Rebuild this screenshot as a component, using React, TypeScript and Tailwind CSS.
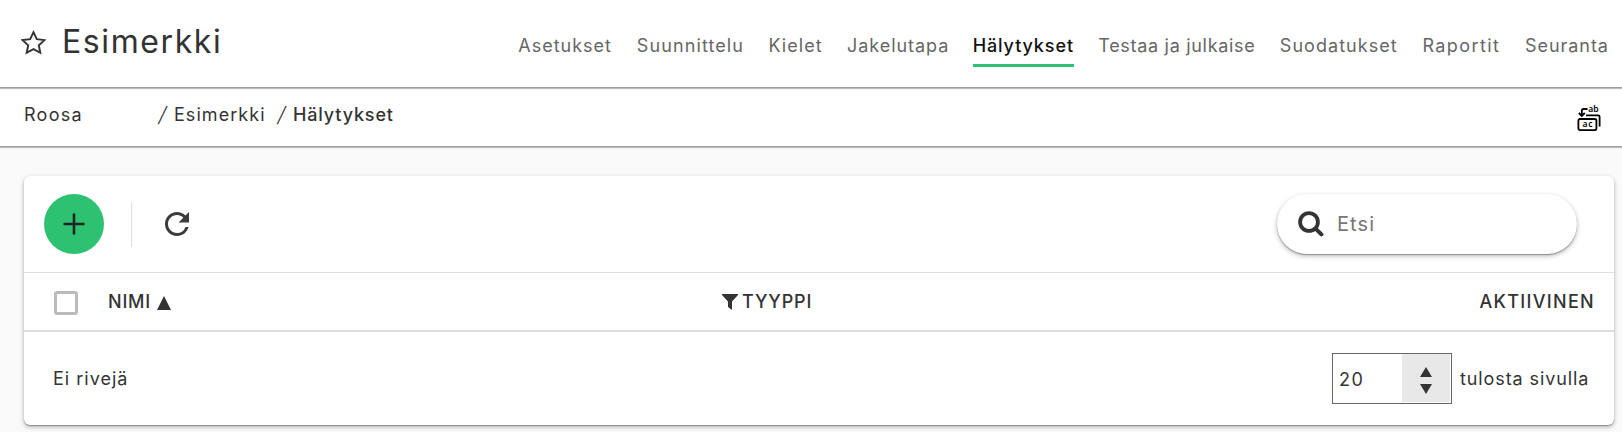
import { clsx } from 'clsx'

interface NavItem {
  label: string
  className: string
  active?: boolean
}

const NAV_ITEMS: NavItem[] = [
  { label: 'Asetukset', className: 'w-[94px] tracking-[1px]' },
  { label: 'Suunnittelu', className: 'w-[107px] tracking-[1.1px]' },
  { label: 'Kielet', className: 'w-[54px] tracking-[1.05px]' },
  { label: 'Jakelutapa', className: 'w-[101px] tracking-[0.95px]' },
  { label: 'Hälytykset', className: 'w-[101px] tracking-[0.9px]', active: true },
  { label: 'Testaa ja julkaise', className: 'w-[157px] tracking-[0.7px]' },
  { label: 'Suodatukset', className: 'w-[118px] tracking-[1.05px]' },
  { label: 'Raportit', className: 'w-[78px] tracking-[1.4px]' },
  { label: 'Seuranta', className: 'w-[83px] tracking-[0.95px]' },
]

// ---------------------------------------------------------------------------
// Icons
// ---------------------------------------------------------------------------

function StarIcon() {
  return (
    <svg viewBox="0 0 26 25" className="w-[26px] h-[25px] shrink-0" fill="none" stroke="#333" strokeWidth="1.9">
      <path d="M12.5 2.2l3.3 6.9 7.6 1-5.6 5.2 1.5 7.5-6.8-3.7-6.8 3.7 1.5-7.5-5.6-5.2 7.6-1z" />
    </svg>
  )
}

function TranslateIcon() {
  return (
    <svg viewBox="0 0 26 30" className="w-[26px] h-[30px]" fill="none" stroke="#000" strokeWidth="1.8">
      <rect x="2.4" y="17" width="18" height="11.2" rx="1.6" />
      <path d="M10 13.4h12.2a1.4 1.4 0 0 1 1.4 1.4v9.7" />
      <path d="M11.5 7H7.6a1.8 1.8 0 0 0-1.8 1.8V13.4" />
      <path d="M2.8 11l3 3 3-3" />
      <text x="12.2" y="9.6" fontSize="8.5" fontFamily="Noto Sans, sans-serif" fontWeight="600" fill="#000" stroke="none">ab</text>
      <text x="6.6" y="25.4" fontSize="8.5" fontFamily="Noto Sans, sans-serif" fontWeight="600" letterSpacing="0.6" fill="#000" stroke="none">ac</text>
    </svg>
  )
}

function RefreshIcon() {
  return (
    <svg viewBox="4 4 16 16" className="w-[24px] h-[24px]" fill="#3c3c3c">
      <path d="M17.65 6.35A7.958 7.958 0 0 0 12 4c-4.42 0-7.99 3.58-7.99 8s3.57 8 7.99 8c3.73 0 6.84-2.55 7.73-6h-2.08A5.99 5.99 0 0 1 12 18c-3.31 0-6-2.69-6-6s2.69-6 6-6c1.66 0 3.14.69 4.22 1.78L13 11h7V4l-2.35 2.35z" />
    </svg>
  )
}

function SearchIcon() {
  return (
    <svg viewBox="0 0 26 26" className="w-[26px] h-[26px] shrink-0" fill="none" stroke="#333" strokeLinecap="round">
      <circle cx="11" cy="11" r="8.9" strokeWidth="3.8" />
      <path d="M17.8 17.8l5.6 5.6" strokeWidth="4" />
    </svg>
  )
}

function FilterIcon() {
  return (
    <svg viewBox="0 0 16 16" className="w-4 h-4" fill="#333">
      <path d="M0 0h16v1L10 7.5V16l-4-3V7.5L0 1z" />
    </svg>
  )
}

// ---------------------------------------------------------------------------
// Page
// ---------------------------------------------------------------------------

function Header() {
  return (
    <header className="h-[87px] flex items-start bg-white pl-[21px] pr-[14px]">
      <div className="flex items-center h-[84px]">
        <StarIcon />
        <h1 className="ml-[15px] text-[32px] leading-10 tracking-[1.6px] text-[#333]">Esimerkki</h1>
      </div>
      <nav className="ml-auto flex gap-[24.6px] pt-8">
        {NAV_ITEMS.map((item) => (
          <a
            key={item.label}
            href="#"
            className={clsx(
              'h-8 box-content text-[18px] leading-7 whitespace-nowrap border-b-[3px]',
              item.className,
              item.active ? 'font-medium text-[#111] border-[#2cc272]' : 'text-[#666] border-transparent',
            )}
          >
            {item.label}
          </a>
        ))}
      </nav>
    </header>
  )
}

function Slash() {
  return <span className="w-4 pl-px text-[21px] font-light -skew-x-12">/</span>
}

function Breadcrumbs() {
  return (
    <div className="h-[59px] flex items-start border-t border-[#a0a0a0] bg-white shadow-[inset_0_1px_0_#bdbdbd,inset_0_2px_0_#f2f2f2] pl-6 pr-5 text-[18px] leading-7 text-[#333]">
      <div className="flex pt-[13px]">
        <span className="w-[134px] tracking-[1.3px]">Roosa</span>
        <Slash />
        <span className="w-[103px] tracking-[1.05px]">Esimerkki</span>
        <Slash />
        <span className="font-medium tracking-[0.85px]">Hälytykset</span>
      </div>
      <div className="ml-auto pt-[14px]">
        <TranslateIcon />
      </div>
    </div>
  )
}

function Toolbar() {
  return (
    <div className="h-24 flex items-center pl-5 pr-[37px]">
      <button type="button" className="w-[60px] h-[60px] rounded-full bg-[#2cc272] flex items-center justify-center">
        <svg viewBox="0 0 22 22" className="w-[22px] h-[22px]" stroke="#222" strokeWidth="2.6">
          <path d="M11 .5v21M.5 11h21" />
        </svg>
      </button>
      <div className="ml-[27px] w-px h-[45px] bg-[#dedede]" />
      <button type="button" className="ml-[33px]">
        <RefreshIcon />
      </button>
      <label className="ml-auto w-[300px] h-[60px] rounded-full bg-white flex items-center pl-[21px] shadow-[0_1px_1px_rgba(0,0,0,0.3),0_2px_5px_rgba(0,0,0,0.28)]">
        <SearchIcon />
        <input placeholder="Etsi" className="ml-[13px] w-52 text-[20px] tracking-[1.1px] outline-none placeholder:text-[#777]" />
      </label>
    </div>
  )
}

function TableHead() {
  return (
    <div className="h-[60px] flex items-center border-t border-t-[#dedede] border-b-2 border-b-[#dedede] pl-[30px] pr-[18px] text-[18px] leading-7 font-medium text-[#333]">
      <span className="mt-0.5 w-6 h-6 rounded-[3px] border-[3px] border-[#bbb]" />
      <div className="ml-[30px] w-[614px] flex items-center">
        <span className="w-[49px] tracking-[0.8px]">NIMI</span>
        <svg viewBox="0 0 14 14" className="w-3.5 h-3.5 mt-0.5" fill="#333">
          <path d="M7 0l7 14H0z" />
        </svg>
      </div>
      <FilterIcon />
      <span className="ml-1 tracking-[0.85px]">TYYPPI</span>
      <span className="ml-auto mr-px tracking-[1.3px]">AKTIIVINEN</span>
    </div>
  )
}

function TableFooter() {
  return (
    <div className="h-[93px] flex items-center pl-[29px] pr-[26px] text-[18px] leading-7 text-[#333]">
      <span className="tracking-[1px]">Ei rivejä</span>
      <div className="ml-auto w-[120px] h-[51px] flex border border-[#666] p-px pt-0 bg-white">
        <span className="w-[69px] pl-[5px] pt-[12px] tracking-[1.6px]">20</span>
        <span className="w-12 h-12 bg-[#e8e8e8] flex flex-col items-center justify-center gap-[7px] pt-1">
          <svg viewBox="0 0 12 10" className="w-3 h-2.5" fill="#333">
            <path d="M6 0l6 10H0z" />
          </svg>
          <svg viewBox="0 0 12 10" className="w-3 h-2.5" fill="#333">
            <path d="M6 10L0 0h12z" />
          </svg>
        </span>
      </div>
      <span className="ml-2 w-[128px] whitespace-nowrap tracking-[0.9px]">tulosta sivulla</span>
    </div>
  )
}

export default function App() {
  return (
    <div className="h-[432px] overflow-hidden bg-[#fafafa] font-['Inter',sans-serif]">
      <Header />
      <Breadcrumbs />
      <main className="border-t border-[#a0a0a0] shadow-[inset_0_1px_0_#bdbdbd,inset_0_2px_0_#f0f0f0] pt-[29px] pl-6 pr-2 pb-8">
        <section className="h-[249px] rounded-md bg-white shadow-[0_1px_1px_rgba(0,0,0,0.3),0_2px_5px_rgba(0,0,0,0.28)]">
          <Toolbar />
          <TableHead />
          <TableFooter />
        </section>
      </main>
    </div>
  )
}
